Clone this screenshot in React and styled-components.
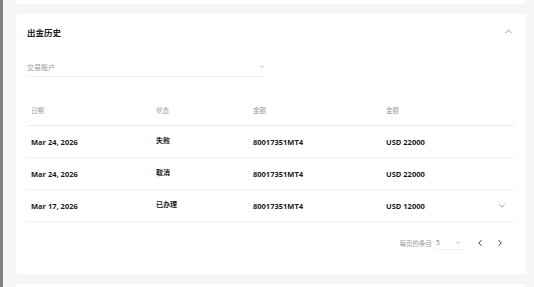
import React from 'react';
import styled, { createGlobalStyle } from 'styled-components';
import { ChevronUp, ChevronDown, ChevronLeft, ChevronRight } from 'lucide-react';

const GlobalStyle = createGlobalStyle`
  html, body {
    margin: 0;
    padding: 0;
    width: 534px;
    height: 287px;
    overflow: hidden;
  }
  body {
    font-family: "Open Sans", "Noto Sans CJK SC", sans-serif;
    color: #1f1f1f;
  }
`;

const Frame = styled.div`
  display: flex;
  width: 534px;
  height: 287px;
  overflow: hidden;
`;

const SideStrip = styled.div`
  width: 3px;
  flex-shrink: 0;
  background: #808080;
`;

const Main = styled.div`
  flex: 1;
  display: flex;
  flex-direction: column;
  gap: 10px;
  padding: 0 8px 0 13px;
  background: #f6f6f7;
`;

const Card = styled.div`
  background: #fff;
  border-radius: ${p => (p.$top ? '0 0 3px 3px' : '3px')};
  height: ${p => p.$h}px;
  flex-shrink: 0;
`;

const Panel = styled(Card)`
  padding: 0 12px 0 11px;
  display: flex;
  flex-direction: column;
`;

const TitleRow = styled.div`
  height: 36px;
  display: flex;
  align-items: center;
  justify-content: space-between;
`;

const Title = styled.h2`
  margin: 0;
  font-size: 8.5px;
  font-weight: 700;
  color: #222;
`;

const IconBtn = styled.span`
  display: flex;
  align-items: center;
  color: ${p => p.$dark ? '#222' : '#666'};
  margin-right: ${p => p.$mr || 0}px;
  margin-left: ${p => p.$ml || 0}px;
  margin-top: ${p => p.$mt || 0}px;
`;

const Select = styled.div`
  margin-top: 8px;
  width: 238px;
  height: 18px;
  display: flex;
  align-items: center;
  justify-content: space-between;
  border-bottom: 1px solid #f0f0f0;
  font-size: 7px;
  color: #9a9a9a;
`;

const Caret = styled.span`
  width: 0;
  height: 0;
  border-left: 2px solid transparent;
  border-right: 2px solid transparent;
  border-top: 2px solid #c8c8c8;
  margin-right: ${p => p.$mr || 0}px;
`;

const Table = styled.div`
  margin-top: 17px;
  display: flex;
  flex-direction: column;
`;

const Row = styled.div`
  display: grid;
  grid-template-columns: 125px 97px 133px 1fr 24px;
  align-items: center;
  height: 32px;
  border-bottom: 1px solid #f1f1f1;
  box-sizing: border-box;
  &:first-child {
    border-bottom-color: #ececec;
  }
`;

const HeadCell = styled.div`
  padding-left: 4px;
  font-size: 6.5px;
  color: #9c9c9c;
`;

const Cell = styled.div`
  padding-left: 4px;
  font-size: ${p => p.$cjk ? '7px' : '7.5px'};
  font-weight: 700;
  color: #1a1a1a;
  margin-top: ${p => p.$cjk ? '-4px' : '0'};
`;

const Pager = styled.div`
  height: 42px;
  display: flex;
  align-items: center;
  justify-content: flex-end;
`;

const PagerLabel = styled.span`
  font-size: 6.5px;
  color: #9a9a9a;
  margin-right: 2px;
`;

const PageSize = styled.div`
  width: 29px;
  height: 14px;
  display: flex;
  align-items: center;
  justify-content: space-between;
  border-bottom: 1px solid #f0f0f0;
  font-size: 6.5px;
  color: #777;
  margin-right: 12px;
  padding-left: 2px;
  box-sizing: border-box;
`;

const rows = [
  { date: 'Mar 24, 2026', status: '失败', account: '80017351MT4', amount: 'USD 22000' },
  { date: 'Mar 24, 2026', status: '取消', account: '80017351MT4', amount: 'USD 22000' },
  { date: 'Mar 17, 2026', status: '已办理', account: '80017351MT4', amount: 'USD 12000', more: true },
];

export default function App() {
  return (
    <Frame>
      <GlobalStyle />
      <SideStrip />
      <Main>
        <Card $top $h={4} />
        <Panel $h={260}>
          <TitleRow>
            <Title>出金历史</Title>
            <IconBtn $mt={-2}><ChevronUp size={11} strokeWidth={1.5} /></IconBtn>
          </TitleRow>
          <Select>
            <span>交易账户</span>
            <Caret $mr={1} />
          </Select>
          <Table>
            <Row>
              <HeadCell>日期</HeadCell>
              <HeadCell>状态</HeadCell>
              <HeadCell>金额</HeadCell>
              <HeadCell>金额</HeadCell>
              <span />
            </Row>
            {rows.map((r, i) => (
              <Row key={i}>
                <Cell>{r.date}</Cell>
                <Cell $cjk>{r.status}</Cell>
                <Cell>{r.account}</Cell>
                <Cell>{r.amount}</Cell>
                {r.more ? <IconBtn $ml={7}><ChevronDown size={10} strokeWidth={1.5} /></IconBtn> : <span />}
              </Row>
            ))}
          </Table>
          <Pager>
            <PagerLabel>每页的条目</PagerLabel>
            <PageSize>
              <span>5</span>
              <Caret $mr={3} />
            </PageSize>
            <IconBtn $dark $mr={10}><ChevronLeft size={10} strokeWidth={2.2} /></IconBtn>
            <IconBtn $dark $mr={9}><ChevronRight size={10} strokeWidth={2.2} /></IconBtn>
          </Pager>
        </Panel>
        <Card $h={20} />
      </Main>
    </Frame>
  );
}
